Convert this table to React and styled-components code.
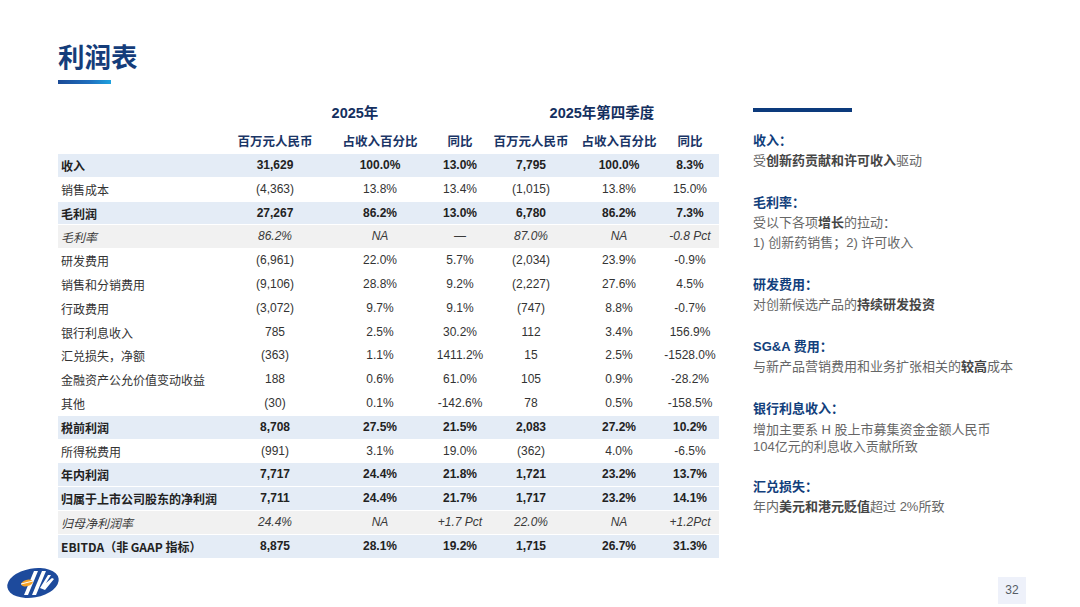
import React from 'react';
import styled, { createGlobalStyle, css } from 'styled-components';

const GlobalStyle = createGlobalStyle`
    html, body {
        margin: 0;
        padding: 0;
        background: #ffffff;
    }
    body {
        font-family: "Liberation Sans", "Noto Sans CJK SC", sans-serif;
    }
`;

const rows = [
    { label: '收入', kind: 'bold', v: ['31,629', '100.0%', '13.0%', '7,795', '100.0%', '8.3%'] },
    { label: '销售成本', v: ['(4,363)', '13.8%', '13.4%', '(1,015)', '13.8%', '15.0%'] },
    { label: '毛利润', kind: 'bold', v: ['27,267', '86.2%', '13.0%', '6,780', '86.2%', '7.3%'] },
    { label: '毛利率', kind: 'italic', v: ['86.2%', 'NA', '—', '87.0%', 'NA', '-0.8 Pct'] },
    { label: '研发费用', v: ['(6,961)', '22.0%', '5.7%', '(2,034)', '23.9%', '-0.9%'] },
    { label: '销售和分销费用', v: ['(9,106)', '28.8%', '9.2%', '(2,227)', '27.6%', '4.5%'] },
    { label: '行政费用', v: ['(3,072)', '9.7%', '9.1%', '(747)', '8.8%', '-0.7%'] },
    { label: '银行利息收入', v: ['785', '2.5%', '30.2%', '112', '3.4%', '156.9%'] },
    { label: '汇兑损失，净额', v: ['(363)', '1.1%', '1411.2%', '15', '2.5%', '-1528.0%'] },
    { label: '金融资产公允价值变动收益', v: ['188', '0.6%', '61.0%', '105', '0.9%', '-28.2%'] },
    { label: '其他', v: ['(30)', '0.1%', '-142.6%', '78', '0.5%', '-158.5%'] },
    { label: '税前利润', kind: 'bold', v: ['8,708', '27.5%', '21.5%', '2,083', '27.2%', '10.2%'] },
    { label: '所得税费用', v: ['(991)', '3.1%', '19.0%', '(362)', '4.0%', '-6.5%'] },
    { label: '年内利润', kind: 'bold', v: ['7,717', '24.4%', '21.8%', '1,721', '23.2%', '13.7%'] },
    { label: '归属于上市公司股东的净利润', kind: 'bold', v: ['7,711', '24.4%', '21.7%', '1,717', '23.2%', '14.1%'] },
    { label: '归母净利润率', kind: 'italic', v: ['24.4%', 'NA', '+1.7 Pct', '22.0%', 'NA', '+1.2Pct'] },
    { label: 'EBITDA（非 GAAP 指标）', kind: 'bold', v: ['8,875', '28.1%', '19.2%', '1,715', '26.7%', '31.3%'] },
];

const colHeads = ['百万元人民币', '占收入百分比', '同比', '百万元人民币', '占收入百分比', '同比'];

const Logo = () => (
    <svg width="58" height="38" viewBox="0 0 58 38">
        <ellipse cx="29" cy="19" rx="26" ry="14.5" fill="#1d4a9c" transform="rotate(-10 29 19)" />
        <path d="M20 31 L30 7 L34 7 L24 31 Z" fill="#ffffff" />
        <path d="M28 31 L38 7 L42 7 L32 31 Z" fill="#ffffff" />
        <path d="M36 24 L44 11 L47 11 L42 19 L48 14 L50 15 L41 26 Z" fill="#ffffff" />
        <ellipse cx="23" cy="19" rx="6" ry="3.2" fill="#f4a228" transform="rotate(-15 23 19)" />
        <path d="M17 20 L29 17" stroke="#ffffff" strokeWidth="1" />
    </svg>
);

const App = () => {
    return (
        <>
            <GlobalStyle />
            <Slide>
                <Header>
                    <Title>利润表</Title>
                    <TitleBar />
                </Header>
                <Body>
                    <Table>
                        <GroupRow>
                            <Cell />
                            <GroupHead $span={3}>2025年</GroupHead>
                            <GroupHead $span={3}>2025年第四季度</GroupHead>
                        </GroupRow>
                        <HeadRow>
                            <Cell />
                            {colHeads.map((h, i) => (
                                <ColHead key={i}>{h}</ColHead>
                            ))}
                        </HeadRow>
                        {rows.map((r) => (
                            <Row key={r.label} $kind={r.kind}>
                                <Label>{r.label}</Label>
                                {r.v.map((v, i) => (
                                    <Cell key={i}>{v}</Cell>
                                ))}
                            </Row>
                        ))}
                    </Table>
                    <Notes>
                        <NotesBar />
                        <Note>
                            <NoteTitle>收入：</NoteTitle>
                            <NoteText>受<b>创新药贡献和许可收入</b>驱动</NoteText>
                        </Note>
                        <Note>
                            <NoteTitle>毛利率：</NoteTitle>
                            <NoteText>受以下各项<b>增长</b>的拉动：</NoteText>
                            <NoteText>1) 创新药销售；2) 许可收入</NoteText>
                        </Note>
                        <Note>
                            <NoteTitle>研发费用：</NoteTitle>
                            <NoteText>对创新候选产品的<b>持续研发投资</b></NoteText>
                        </Note>
                        <Note>
                            <NoteTitle>SG&amp;A 费用：</NoteTitle>
                            <NoteText>与新产品营销费用和业务扩张相关的<b>较高</b>成本</NoteText>
                        </Note>
                        <Note>
                            <NoteTitle>银行利息收入：</NoteTitle>
                            <NoteText $tight>
                                增加主要系 H 股上市募集资金金额人民币
                                <br />
                                104亿元的利息收入贡献所致
                            </NoteText>
                        </Note>
                        <Note>
                            <NoteTitle>汇兑损失：</NoteTitle>
                            <NoteText>年内<b>美元和港元贬值</b>超过 2%所致</NoteText>
                        </Note>
                    </Notes>
                </Body>
                <Footer>
                    <LogoWrap>
                        <Logo />
                    </LogoWrap>
                    <PageNum>32</PageNum>
                </Footer>
            </Slide>
        </>
    );
};
export default App;

const Slide = styled.div`
    width: 1080px;
    height: 607px;
    display: flex;
    flex-direction: column;
    background: #ffffff;
    overflow: hidden;
    box-sizing: border-box;
`;
const Header = styled.div`
    padding: 40px 0 0 58px;
`;
const Title = styled.h1`
    margin: 0;
    font-family: "Noto Sans CJK SC", sans-serif;
    font-size: 26.5px;
    line-height: 32px;
    font-weight: 700;
    color: #153d7a;
`;
const TitleBar = styled.div`
    margin-top: 8px;
    width: 53px;
    height: 4px;
    background: linear-gradient(90deg, #1b4a96 0%, #1f6fbe 60%, #1ea2df 100%);
`;
const Body = styled.div`
    display: flex;
    align-items: flex-start;
    gap: 34px;
    padding: 16px 0 0 58px;
`;
const Table = styled.div`
    display: grid;
    grid-template-columns: 167px 100px 110px 50px 92px 84px 58px;
    width: 661px;
`;
const rowBase = css`
    display: contents;
`;
const GroupRow = styled.div`
    ${rowBase}
`;
const HeadRow = styled.div`
    ${rowBase}
`;
const Row = styled.div`
    ${rowBase}
    & > div {
        height: 23.8px;
        line-height: 23.8px;
        font-size: 12px;
        color: #333333;
        box-sizing: border-box;
        border-bottom: 1px solid #ffffff;
        ${(p) =>
            p.$kind === 'bold' &&
            css`
                background: #e4ecf6;
                font-weight: 700;
                color: #222222;
            `}
        ${(p) =>
            p.$kind === 'italic' &&
            css`
                background: #f1f1f1;
                font-style: italic;
                color: #3a3a3a;
            `}
    }
`;
const Cell = styled.div`
    text-align: center;
    white-space: nowrap;
`;
const Label = styled.div`
    text-align: left;
    padding-left: 3px;
    white-space: nowrap;
    font-family: "Noto Sans CJK SC", sans-serif;
`;
const GroupHead = styled.div`
    grid-column: span ${(p) => p.$span};
    text-align: center;
    height: 27px;
    line-height: 27px;
    font-size: 14.5px;
    font-weight: 700;
    color: #14305f;
`;
const ColHead = styled.div`
    text-align: center;
    height: 27px;
    line-height: 27px;
    font-family: "Noto Sans CJK SC", sans-serif;
    font-size: 12.5px;
    font-weight: 700;
    color: #1a3566;
    white-space: nowrap;
`;
const Notes = styled.div`
    display: flex;
    flex-direction: column;
    gap: 22px;
    padding-top: 8px;
    width: 290px;
    font-family: "Liberation Sans", "Noto Sans CJK SC", sans-serif;
`;
const NotesBar = styled.div`
    width: 99px;
    height: 4px;
    background: #0c3a7c;
    margin-bottom: -3px;
`;
const Note = styled.div`
    display: flex;
    flex-direction: column;
`;
const NoteTitle = styled.div`
    font-size: 13px;
    line-height: 20px;
    font-weight: 700;
    color: #123f7c;
`;
const NoteText = styled.div`
    font-size: 13px;
    line-height: ${(p) => (p.$tight ? '17px' : '20px')};
    padding-top: ${(p) => (p.$tight ? '2px' : '0')};
    color: #666666;
    white-space: nowrap;
    b {
        color: #454545;
        font-weight: 700;
    }
`;
const Footer = styled.div`
    margin-top: auto;
    display: flex;
    justify-content: space-between;
    align-items: flex-end;
    padding: 0 54px 3px 4px;
`;
const LogoWrap = styled.div`
    display: flex;
    margin-bottom: 2px;
`;
const PageNum = styled.div`
    width: 28px;
    height: 27px;
    line-height: 27px;
    text-align: center;
    background: #eef1fa;
    color: #555c66;
    font-size: 12px;
`;
